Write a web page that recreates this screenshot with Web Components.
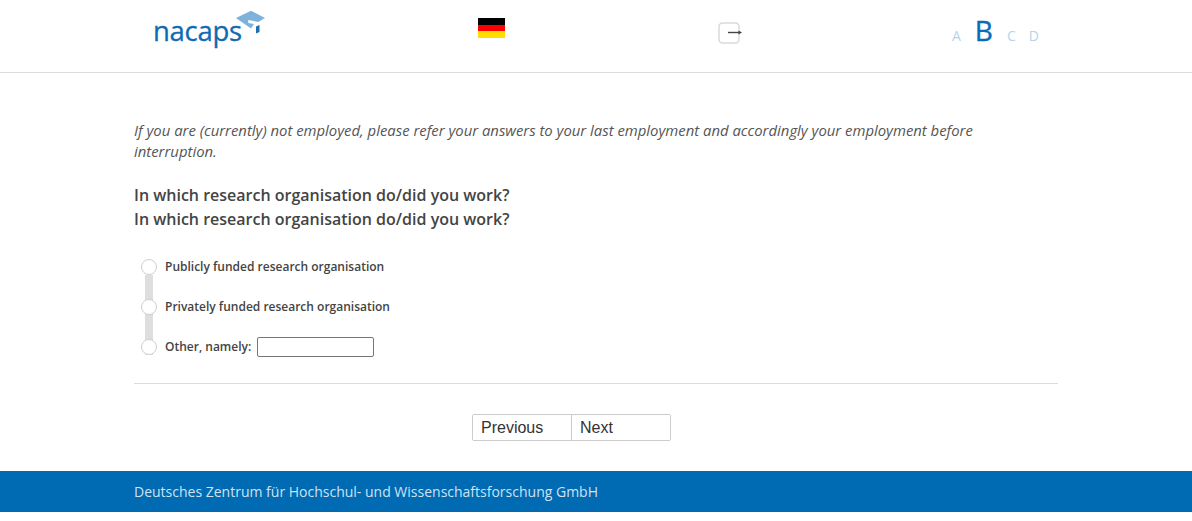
<!DOCTYPE html>
<html lang="en">
<head>
<meta charset="utf-8">
<title>nacaps</title>
<style>
html, body { margin: 0; padding: 0; background: #fff; }
body { font-family: "Open Sans", sans-serif; color: #444; }
</style>
</head>
<body>
<survey-page>
  <survey-header slot="header"></survey-header>
  <survey-question slot="main">
    <span slot="note">If you are (currently) not employed, please refer your answers to your last employment and accordingly your employment before interruption.</span>
    <span slot="title">In which research organisation do/did you work?<br>In which research organisation do/did you work?</span>
    <radio-list>
      <radio-item>Publicly funded research organisation</radio-item>
      <radio-item>Privately funded research organisation</radio-item>
      <radio-item other>Other, namely:</radio-item>
    </radio-list>
  </survey-question>
  <survey-nav slot="main"></survey-nav>
  <survey-footer slot="footer">Deutsches Zentrum für Hochschul- und Wissenschaftsforschung GmbH</survey-footer>
</survey-page>

<script>
// Page frame
class SurveyPage extends HTMLElement {
    constructor() {
        super();
        var shadow = this.attachShadow({mode: 'open'});
        shadow.innerHTML = `
        <style>
        :host { display: block; }
        main { width: 924px; margin-left: 134px; }
        </style>
        <slot name="header"></slot>
        <main><slot name="main"></slot></main>
        <slot name="footer"></slot>
        `;
    }
}

// Logo, flag, exit button and the version letters
class SurveyHeader extends HTMLElement {
    constructor() {
        super();
        var shadow = this.attachShadow({mode: 'open'});
        shadow.innerHTML = `
        <style>
        :host {
            display: grid;
            grid-template-columns: 325px 240px 234px auto;
            height: 72px;
            padding-left: 153px;
            border-bottom: 1px solid #dcdcdc;
        }
        .logo { position: relative; width: 114px; height: 50px; margin-top: 10px; }
        .logo span {
            position: absolute; left: 0; top: 4px;
            font: 27.5px/34px "Open Sans", sans-serif;
            -webkit-text-stroke: 0.3px #0f6bb1;
            letter-spacing: -0.3px;
            color: #0f6bb1;
        }
        .logo svg { position: absolute; left: 81px; top: 0; }
        .flag { width: 27px; height: 20px; margin-top: 18px; display: flex; flex-direction: column; }
        .flag i { flex: 1; }
        .exit { margin-top: 22px; }
        .letters {
            display: flex; align-items: baseline; gap: 14px;
            margin-top: 13px; height: 34px;
            color: #b5d4ec; font-size: 14px; line-height: 34px;
        }
        .letters b { font-weight: 400; font-size: 28px; color: #0a6cb6; -webkit-text-stroke: 0.4px #0a6cb6; }
        .letters .c { margin-right: -1px; }
        </style>
        <div class="logo">
            <span>nacaps</span>
            <svg width="32" height="26" viewBox="0 0 32 26">
                <path d="M2 8 L17 0.7 L31 8 L24.3 12 L14.3 10 L14.3 13 L20 14 L17 18.5 Z" fill="#7fb2db"/>
                <path d="M22 16.5 L25.5 15 L25.5 22 L22 23.5 Z" fill="#1a70b3"/>
            </svg>
        </div>
        <div class="flag"><i style="background:#000"></i><i style="background:#f00"></i><i style="background:#ffde00"></i></div>
        <div class="exit">
            <svg width="26" height="23" viewBox="0 0 26 23">
                <rect x="1" y="1" width="20" height="20" rx="3.5" fill="#fff" stroke="#dadada" stroke-width="1.5"/>
                <path d="M10 10.5 H21" stroke="#444" stroke-width="1.4" fill="none"/>
                <path d="M20.5 8.5 L24 10.5 L20.5 12.5 Z" fill="#444"/>
            </svg>
        </div>
        <div class="letters"><span>A</span><b>B</b><span class="c">C</span><span>D</span></div>
        `;
    }
}

// Note, question title, answers
class SurveyQuestion extends HTMLElement {
    constructor() {
        super();
        var shadow = this.attachShadow({mode: 'open'});
        shadow.innerHTML = `
        <style>
        :host { display: block; padding-top: 47px; border-bottom: 1px solid #dcdcdc; padding-bottom: 24px; }
        .note { font-style: italic; font-size: 14.87px; line-height: 21px; color: #555; }
        .title { margin-top: 21px; font-weight: 600; font-size: 16px; line-height: 24px; color: #444; }
        .list { margin-top: 24px; }
        </style>
        <div class="note"><slot name="note"></slot></div>
        <div class="title"><slot name="title"></slot></div>
        <div class="list"><slot></slot></div>
        `;
    }
}

class RadioList extends HTMLElement {
    constructor() {
        super();
        var shadow = this.attachShadow({mode: 'open'});
        shadow.innerHTML = `
        <style>
        :host { display: block; position: relative; padding-left: 7px; }
        .rail { position: absolute; left: 11px; top: 20px; width: 8px; height: 80px; background: #dedede; }
        .items { position: relative; display: flex; flex-direction: column; gap: 16px; }
        </style>
        <div class="rail"></div>
        <div class="items"><slot></slot></div>
        `;
    }
}

class RadioItem extends HTMLElement {
    constructor() {
        super();
        var shadow = this.attachShadow({mode: 'open'});
        var extra = this.hasAttribute('other') ? '<input type="text">' : '';
        shadow.innerHTML = `
        <style>
        :host { display: flex; align-items: center; height: 24px; }
        .dot {
            width: 14px; height: 14px; border-radius: 50%;
            background: #fff; border: 1px solid #cfcfcf; flex: none;
            margin-right: 8px;
        }
        label { font-weight: 600; font-size: 12px; color: #444; margin-bottom: 2px; }
        input {
            width: 117px; height: 20px; margin-left: 6px; padding: 0;
            box-sizing: border-box;
            border: 1px solid #767676; border-radius: 2px; background: #fff;
        }
        </style>
        <div class="dot"></div><label><slot></slot></label>${extra}
        `;
    }
}

class SurveyNav extends HTMLElement {
    constructor() {
        super();
        var shadow = this.attachShadow({mode: 'open'});
        shadow.innerHTML = `
        <style>
        :host { display: flex; padding: 30px 0 30px 338px; }
        .group { display: flex; border: 1px solid #ccc; border-radius: 2px; height: 25px; }
        button {
            width: 98px; padding: 0 0 0 8px; margin: 0; border: 0; background: #fff;
            text-align: left; font: 16px "Liberation Sans", Arial, sans-serif; color: #333;
        }
        button + button { border-left: 1px solid #ccc; width: 99px; }
        </style>
        <div class="group"><button>Previous</button><button>Next</button></div>
        `;
    }
}

class SurveyFooter extends HTMLElement {
    constructor() {
        super();
        var shadow = this.attachShadow({mode: 'open'});
        shadow.innerHTML = `
        <style>
        :host {
            display: block; height: 41px; padding-left: 134px;
            background: #006ab3; color: #cfe2f1;
            font-size: 14px; line-height: 41px;
        }
        </style>
        <slot></slot>
        `;
    }
}

customElements.define('survey-page', SurveyPage);
customElements.define('survey-header', SurveyHeader);
customElements.define('survey-question', SurveyQuestion);
customElements.define('radio-list', RadioList);
customElements.define('radio-item', RadioItem);
customElements.define('survey-nav', SurveyNav);
customElements.define('survey-footer', SurveyFooter);
</script>
</body>
</html>
